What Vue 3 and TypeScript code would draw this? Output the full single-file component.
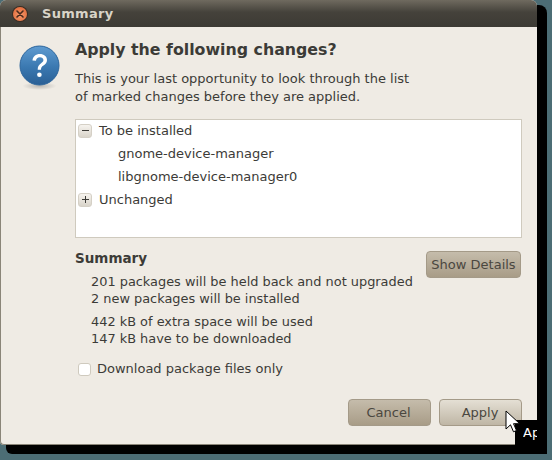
<script setup lang="ts">
interface TreeRow { label: string; sign?: string }
const rows: TreeRow[] = [
  { label: 'To be installed', sign: 'minus' },
  { label: 'gnome-device-manager' },
  { label: 'libgnome-device-manager0' },
  { label: 'Unchanged', sign: 'plus' },
]
</script>

<template>
  <div class="desktop">
    <div class="window">
      <header class="titlebar">
        <span class="close">
          <svg width="12" height="12" viewBox="0 0 12 12"><path d="M3 3l6 6M9 3l-6 6" stroke="#4a2a1c" stroke-width="1.6" stroke-linecap="round" /></svg>
        </span>
        <span class="title">Summary</span>
      </header>
      <main class="body">
        <div class="icon-col">
          <svg width="42" height="46" viewBox="0 0 42 46">
            <defs>
              <linearGradient id="ball" x1="0" y1="0" x2="0" y2="1">
                <stop offset="0" stop-color="#5f9bd0" />
                <stop offset="0.55" stop-color="#3a78b0" />
                <stop offset="1" stop-color="#2a5f95" />
              </linearGradient>
              <radialGradient id="shade" cx="0.5" cy="0.5" r="0.5">
                <stop offset="0" stop-color="#000" stop-opacity="0.22" />
                <stop offset="1" stop-color="#000" stop-opacity="0" />
              </radialGradient>
            </defs>
            <ellipse cx="20.5" cy="41" rx="17" ry="4" fill="url(#shade)" />
            <circle cx="20.5" cy="20.5" r="19.5" fill="url(#ball)" stroke="#2c659c" stroke-width="1" />
            <path d="M13.5 15.5c.3-4 3.3-6.5 7.300-6.500 4.200 0 7.200 2.500 7.200 6 0 2.700-1.500 4.100-3.500 5.500-1.800 1.200-2.500 2-2.500 4.200h-3.300c0-3.200 1-4.700 3.100-6.200 1.700-1.200 2.600-2 2.600-3.400 0-1.700-1.500-2.800-3.500-2.800-2.300 0-3.700 1.200-3.900 3.500z" fill="#fff" />
            <circle cx="20.400" cy="29.800" r="2.300" fill="#fff" />
          </svg>
        </div>
        <div class="content">
          <h1 class="heading">Apply the following changes?</h1>
          <p class="intro">This is your last opportunity to look through the list<br />of marked changes before they are applied.</p>
          <div class="tree">
            <div v-for="r in rows" :key="r.label" class="tree-row" :class="{ leaf: !r.sign }">
              <span v-if="r.sign" class="expander">
                <svg width="7" height="7" viewBox="0 0 7 7">
                  <path v-if="r.sign === 'minus'" d="M0 3.500h7" stroke="#3c3b37" stroke-width="1" />
                  <path v-else d="M0 3.500h7M3.500 0v7" stroke="#3c3b37" stroke-width="1" />
                </svg>
              </span>
              <span>{{ r.label }}</span>
            </div>
          </div>
          <div class="summary">
            <div class="summary-text">
              <h2 class="summary-title">Summary</h2>
              <div class="lines">
                <p>201 packages will be held back and not upgraded</p>
                <p>2 new packages will be installed</p>
              </div>
              <div class="lines second">
                <p>442 kB of extra space will be used</p>
                <p>147 kB have to be downloaded</p>
              </div>
            </div>
            <button class="btn details">Show Details</button>
          </div>
          <label class="check"><span class="box"></span>Download package files only</label>
          <div class="actions">
            <button class="btn cancel">Cancel</button>
            <button class="btn apply">Apply</button>
          </div>
        </div>
      </main>
    </div>
    <div class="tooltip"><span class="tip-text">Ap</span></div>
    <svg class="cursor" width="17" height="24" viewBox="0 0 17 24">
      <path d="M1 1v18l4.500-4.200 3 7 3-1.300-3-6.800h6.200z" fill="#fff" stroke="#000" stroke-width="1" stroke-linejoin="round" />
    </svg>
  </div>
</template>

<style>
html, body { margin: 0; background: #4c6d75; }
</style>

<style scoped>
.desktop {
  position: relative;
  width: 552px;
  height: 460px;
  overflow: hidden;
  background: #4c6d75;
  font-family: "DejaVu Sans", sans-serif;
  color: #3c3b37;
}
.window {
  width: 537px;
  height: 445px;
  display: flex;
  flex-direction: column;
  box-sizing: border-box;
  border-radius: 6px 6px 0 4px;
  box-shadow: 8px 7px 0 2px #000;
  background: #efebe4;
}
.titlebar {
  height: 27px;
  flex: none;
  display: flex;
  align-items: center;
  gap: 12px;
  padding-left: 13px;
  border-radius: 6px 6px 0 0;
  background: linear-gradient(#6f6a5f, #45423b 45%, #3c3a34);
}
.close {
  width: 14px;
  height: 14px;
  border-radius: 50%;
  display: flex;
  align-items: center;
  justify-content: center;
  background: radial-gradient(circle at 50% 60%, #f79a6c, #dd5f2f);
  box-shadow: 0 0 0 1px #3a2c22;
}
.title {
  font-size: 13px;
  font-weight: 700;
  color: #d9d4c8;
  letter-spacing: 0.300px;
  margin-left: 3px;
}
.body {
  flex: 1;
  display: flex;
  border-left: 1px solid #8a8578;
  border-bottom: 1px solid #8a8578;
  border-radius: 0 0 0 4px;
  padding: 14px 15px 0 18px;
}
.icon-col { width: 56px; flex: none; padding-top: 4px; }
.content { flex: 1; display: flex; flex-direction: column; min-width: 0; }
.heading {
  margin: 0;
  font-size: 15.800px;
  line-height: 18px;
  font-weight: 700;
  color: #3c3b37;
}
.intro {
  margin: 11px 0 0;
  font-size: 13px;
  line-height: 18px;
}
.tree {
  margin-top: 13px;
  height: 119px;
  box-sizing: border-box;
  background: #fff;
  border: 1px solid #cfcabe;
  font-size: 13px;
}
.tree-row {
  height: 23px;
  box-sizing: border-box;
  display: flex;
  align-items: center;
  gap: 7px;
  padding-left: 2px;
}
.tree-row:first-child { height: 22px; padding-bottom: 1px; }
.tree-row.leaf { padding-left: 42px; }
.expander {
  width: 14px;
  height: 14px;
  box-sizing: border-box;
  border: 1px solid #d5d0c6;
  border-radius: 3px;
  background: linear-gradient(#f6f3ee, #d9d4ca);
  display: flex;
  align-items: center;
  justify-content: center;
}
.summary {
  display: flex;
  justify-content: space-between;
  align-items: flex-start;
  margin-top: 13px;
}
.summary-text { font-size: 12.900px; }
.summary-title { margin: 0 0 7px; font-size: 13.500px; line-height: 15px; font-weight: 700; }
.lines { padding-left: 16px; margin-top: 0; }
.lines p { margin: 0; line-height: 17px; }
.lines.second { margin-top: 6px; }
.btn {
  font-family: inherit;
  font-size: 13px;
  color: #4a4740;
  height: 27px;
  box-sizing: border-box;
  border-radius: 4px;
  border: 1px solid #a49a88;
  background: linear-gradient(#c5bcab, #a89c87);
  padding: 0 2px 0 0;
}
.details { width: 95px; flex: none; margin-right: 1px; padding: 0; }
.cancel { width: 83px; }
.apply { width: 83px; background: linear-gradient(#e4dfd4, #bfb6a5); padding-right: 1px; }
.check {
  display: flex;
  align-items: center;
  gap: 6px;
  margin-top: 13px;
  padding-left: 3px;
  font-size: 13px;
  line-height: 18px;
}
.box {
  width: 11px;
  height: 11px;
  border: 1px solid #cfcabe;
  border-radius: 3px;
  background: #fff;
}
.actions {
  display: flex;
  justify-content: flex-end;
  gap: 8px;
  margin-top: 21px;
}
.tooltip {
  position: absolute;
  left: 515px;
  top: 420px;
  width: 30px;
  height: 26px;
  background: #000;
  color: #fff;
  font-size: 13px;
  line-height: 26px;
  padding-left: 8px;
  box-sizing: border-box;
  border-radius: 0 0 4px 0;
}
.tip-text { display: block; width: 14px; overflow: hidden; }
.cursor { position: absolute; left: 505px; top: 410px; }
</style>
